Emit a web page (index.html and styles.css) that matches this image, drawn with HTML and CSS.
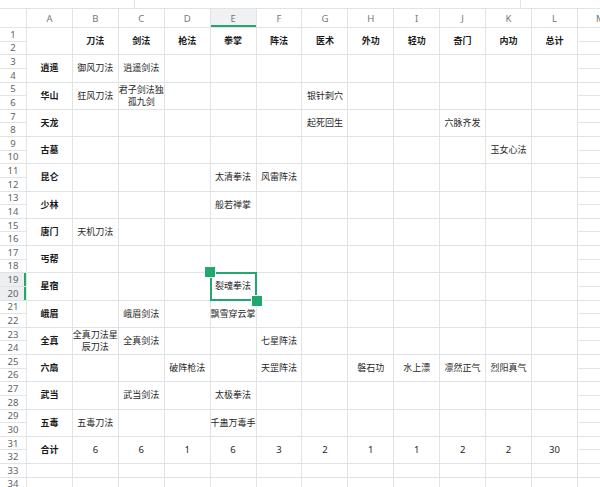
FILE: index.html
```html
<!DOCTYPE html>
<html lang="zh-CN">
<head>
<meta charset="utf-8">
<title>门派武学统计</title>
<link rel="stylesheet" href="styles.css">
</head>
<body>
<div class="sheet">
  <div class="topbar"><div class="tb"></div><div class="tb"></div><div></div></div>
  <div class="grid">
    <div class="corner"></div>
    <div class="ch">A</div><div class="ch">B</div><div class="ch">C</div><div class="ch">D</div><div class="ch on">E</div><div class="ch">F</div><div class="ch">G</div><div class="ch">H</div><div class="ch">I</div><div class="ch">J</div><div class="ch">K</div><div class="ch">L</div><div class="ch">M</div>

    <div class="rn">1</div>
    <div class="c b"></div><div class="c b">刀法</div><div class="c b">剑法</div><div class="c b">枪法</div><div class="c b">拳掌</div><div class="c b">阵法</div><div class="c b">医术</div><div class="c b">外功</div><div class="c b">轻功</div><div class="c b">奇门</div><div class="c b">内功</div><div class="c b">总计</div>
    <div class="m"></div><div class="rn">2</div><div class="m"></div>

    <div class="rn">3</div>
    <div class="c b">逍遥</div><div class="c">御风刀法</div><div class="c">逍遥剑法</div><div class="c"></div><div class="c"></div><div class="c"></div><div class="c"></div><div class="c"></div><div class="c"></div><div class="c"></div><div class="c"></div><div class="c"></div>
    <div class="m"></div><div class="rn">4</div><div class="m"></div>

    <div class="rn">5</div>
    <div class="c b">华山</div><div class="c">狂风刀法</div><div class="c">君子剑法独<br>孤九剑</div><div class="c"></div><div class="c"></div><div class="c"></div><div class="c">银针刺穴</div><div class="c"></div><div class="c"></div><div class="c"></div><div class="c"></div><div class="c"></div>
    <div class="m"></div><div class="rn">6</div><div class="m"></div>

    <div class="rn">7</div>
    <div class="c b">天龙</div><div class="c"></div><div class="c"></div><div class="c"></div><div class="c"></div><div class="c"></div><div class="c">起死回生</div><div class="c"></div><div class="c"></div><div class="c">六脉齐发</div><div class="c"></div><div class="c"></div>
    <div class="m"></div><div class="rn">8</div><div class="m"></div>

    <div class="rn">9</div>
    <div class="c b">古墓</div><div class="c"></div><div class="c"></div><div class="c"></div><div class="c"></div><div class="c"></div><div class="c"></div><div class="c"></div><div class="c"></div><div class="c"></div><div class="c">玉女心法</div><div class="c"></div>
    <div class="m"></div><div class="rn">10</div><div class="m"></div>

    <div class="rn">11</div>
    <div class="c b">昆仑</div><div class="c"></div><div class="c"></div><div class="c"></div><div class="c">太清拳法</div><div class="c">风雷阵法</div><div class="c"></div><div class="c"></div><div class="c"></div><div class="c"></div><div class="c"></div><div class="c"></div>
    <div class="m"></div><div class="rn">12</div><div class="m"></div>

    <div class="rn">13</div>
    <div class="c b">少林</div><div class="c"></div><div class="c"></div><div class="c"></div><div class="c">般若禅掌</div><div class="c"></div><div class="c"></div><div class="c"></div><div class="c"></div><div class="c"></div><div class="c"></div><div class="c"></div>
    <div class="m"></div><div class="rn">14</div><div class="m"></div>

    <div class="rn">15</div>
    <div class="c b">唐门</div><div class="c">天机刀法</div><div class="c"></div><div class="c"></div><div class="c"></div><div class="c"></div><div class="c"></div><div class="c"></div><div class="c"></div><div class="c"></div><div class="c"></div><div class="c"></div>
    <div class="m"></div><div class="rn">16</div><div class="m"></div>

    <div class="rn">17</div>
    <div class="c b">丐帮</div><div class="c"></div><div class="c"></div><div class="c"></div><div class="c"></div><div class="c"></div><div class="c"></div><div class="c"></div><div class="c"></div><div class="c"></div><div class="c"></div><div class="c"></div>
    <div class="m"></div><div class="rn">18</div><div class="m"></div>

    <div class="rn on">19</div>
    <div class="c b">星宿</div><div class="c"></div><div class="c"></div><div class="c"></div><div class="c sel">裂魂拳法<span class="hd tl"></span><span class="hd br"></span></div><div class="c"></div><div class="c"></div><div class="c"></div><div class="c"></div><div class="c"></div><div class="c"></div><div class="c"></div>
    <div class="m"></div><div class="rn on">20</div><div class="m"></div>

    <div class="rn">21</div>
    <div class="c b">峨眉</div><div class="c"></div><div class="c">峨眉剑法</div><div class="c"></div><div class="c">飘雪穿云掌</div><div class="c"></div><div class="c"></div><div class="c"></div><div class="c"></div><div class="c"></div><div class="c"></div><div class="c"></div>
    <div class="m"></div><div class="rn">22</div><div class="m"></div>

    <div class="rn">23</div>
    <div class="c b">全真</div><div class="c">全真刀法星<br>辰刀法</div><div class="c">全真剑法</div><div class="c"></div><div class="c"></div><div class="c">七星阵法</div><div class="c"></div><div class="c"></div><div class="c"></div><div class="c"></div><div class="c"></div><div class="c"></div>
    <div class="m"></div><div class="rn">24</div><div class="m"></div>

    <div class="rn">25</div>
    <div class="c b">六扇</div><div class="c"></div><div class="c"></div><div class="c">破阵枪法</div><div class="c"></div><div class="c">天罡阵法</div><div class="c"></div><div class="c">磐石功</div><div class="c">水上漂</div><div class="c">凛然正气</div><div class="c">烈阳真气</div><div class="c"></div>
    <div class="m"></div><div class="rn">26</div><div class="m"></div>

    <div class="rn">27</div>
    <div class="c b">武当</div><div class="c"></div><div class="c">武当剑法</div><div class="c"></div><div class="c">太极拳法</div><div class="c"></div><div class="c"></div><div class="c"></div><div class="c"></div><div class="c"></div><div class="c"></div><div class="c"></div>
    <div class="m"></div><div class="rn">28</div><div class="m"></div>

    <div class="rn">29</div>
    <div class="c b">五毒</div><div class="c">五毒刀法</div><div class="c"></div><div class="c"></div><div class="c">千蛊万毒手</div><div class="c"></div><div class="c"></div><div class="c"></div><div class="c"></div><div class="c"></div><div class="c"></div><div class="c"></div>
    <div class="m"></div><div class="rn">30</div><div class="m"></div>

    <div class="rn">31</div>
    <div class="c b">合计</div><div class="c n">6</div><div class="c n">6</div><div class="c n">1</div><div class="c n">6</div><div class="c n">3</div><div class="c n">2</div><div class="c n">1</div><div class="c n">1</div><div class="c n">2</div><div class="c n">2</div><div class="c n">30</div>
    <div class="m"></div><div class="rn">32</div><div class="m"></div>

    <div class="rn">33</div>
    <div class="s"></div><div class="s"></div><div class="s"></div><div class="s"></div><div class="s"></div><div class="s"></div><div class="s"></div><div class="s"></div><div class="s"></div><div class="s"></div><div class="s"></div><div class="s"></div>
    <div class="m"></div>

    <div class="rn">34</div>
    <div class="s"></div><div class="s"></div><div class="s"></div><div class="s"></div><div class="s"></div><div class="s"></div><div class="s"></div><div class="s"></div><div class="s"></div><div class="s"></div><div class="s"></div><div class="s"></div>
    <div class="m"></div>
  </div>
</div>
</body>
</html>
```
FILE: styles.css
```css
html, body {
  margin: 0;
  padding: 0;
  background: #fff;
}
body {
  font-family: "Noto Sans", "Noto Sans CJK SC", sans-serif;
  font-size: 9px;
  color: #222;
  overflow: hidden;
}
.sheet {
  width: 600px;
  height: 487px;
  overflow: hidden;
}
.topbar {
  height: 9px;
  box-sizing: border-box;
  border-bottom: 1px solid #e1e3e5;
  display: grid;
  grid-template-columns: 135px 386px 1fr;
}
.tb {
  border-right: 1px solid #e1e3e5;
}
.grid {
  display: grid;
  grid-template-columns: 27px repeat(13, 45.92px);
  grid-template-rows: 19px repeat(34, 13.625px);
}
.grid > div {
  box-sizing: border-box;
  border-right: 1px solid #e1e3e5;
  border-bottom: 1px solid #e1e3e5;
  display: flex;
  align-items: center;
  justify-content: center;
  text-align: center;
  white-space: nowrap;
  min-width: 0;
}
.corner {
  grid-column: 1;
}
.ch {
  color: #777;
  font-size: 9.5px;
}
.ch.on {
  background: #eff1f2;
  box-shadow: inset 0 -2px 0 #22a86f;
}
.rn {
  grid-column: 1;
  color: #606366;
  font-size: 9.5px;
}
.rn.on {
  background: #eceef0;
  box-shadow: inset -2px 0 0 #22a86f;
}
.m {
  grid-column: 14;
}
.c {
  grid-row: span 2;
  line-height: 12px;
  font-size: 9px;
  color: #262626;
}
.c.b {
  font-weight: 700;
  color: #1a1a1a;
}
.c.n {
  font-size: 9.5px;
}
.sel {
  position: relative;
  overflow: visible;
}
.sel::after {
  content: "";
  position: absolute;
  left: -1px;
  top: -1px;
  right: -1px;
  bottom: -1px;
  border: 2px solid #22a86f;
  pointer-events: none;
}
.hd {
  position: absolute;
  width: 10px;
  height: 10px;
  background: #22a86f;
  border: 1px solid #fff;
  z-index: 2;
}
.hd.tl {
  left: -7px;
  top: -7px;
}
.hd.br {
  right: -7px;
  bottom: -7px;
}
```
